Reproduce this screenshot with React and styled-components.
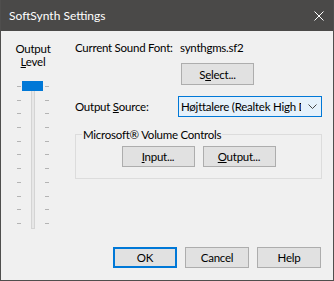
import React from 'react';
import styled, { createGlobalStyle } from 'styled-components';

const FONT = `Lato, "Noto Sans", "Liberation Sans", sans-serif`;

const Global = createGlobalStyle`
  html, body { margin: 0; padding: 0; background: #f0f0f0; }
  body { font-family: ${FONT}; font-size: 12px; }
`;

const Window = styled.div`
  box-sizing: border-box;
  width: 334px;
  height: 281px;
  display: flex;
  flex-direction: column;
  background: #f0f0f0;
  border: 1px solid #4f4e4d;
  border-top: none;
  font-family: ${FONT};
  font-size: 11.5px;
  letter-spacing: -0.25px;
  line-height: 13px;
  color: #000;
  overflow: hidden;
`;

const TitleBar = styled.div`
  box-sizing: border-box;
  height: 31px;
  margin: 0 -1px;
  padding: 0 10px 0 9px;
  background: #4a4948;
  color: #fff;
  display: flex;
  align-items: center;
  justify-content: space-between;
  font-size: 12px;
  letter-spacing: 0;
  flex: none;
`;

const Body = styled.div`
  display: flex;
  min-width: 0;
`;

const SliderColumn = styled.div`
  flex: none;
  width: 64px;
  padding-top: 11px;
  display: flex;
  flex-direction: column;
  align-items: center;
`;

const SliderLabel = styled.div`
  text-align: center;
  white-space: nowrap;
`;

const Slider = styled.div`
  position: relative;
  margin-top: 13px;
  width: 32px;
  height: 148px;
  display: grid;
  grid-template-columns: 4px 1fr 4px;
`;

const TickColumn = styled.div`
  display: flex;
  flex-direction: column;
  justify-content: space-between;
  padding: 5px 0;
`;

const Tick = styled.div`
  height: 1px;
  background: #b4b4b4;
`;

const Track = styled.div`
  box-sizing: border-box;
  justify-self: center;
  width: 4px;
  height: 100%;
  border: 1px solid #d4d4d4;
  background: #e7e7e7;
`;

const Thumb = styled.div`
  position: absolute;
  left: 5px;
  top: 0;
  width: 21px;
  height: 10px;
  background: #0078d7;
`;

const RightPanel = styled.div`
  flex: 1;
  min-width: 0;
  padding: 10px 11px 0 10px;
  display: flex;
  flex-direction: column;
`;

const Row = styled.div`
  display: flex;
  align-items: center;
  min-width: 0;
  margin-top: ${p => p.$mt || 0}px;
`;

const Label = styled.div`
  width: 103px;
  flex: none;
  white-space: nowrap;
`;

const Value = styled.div`
  padding-left: 2px;
  white-space: nowrap;
`;

const Button = styled.button`
  box-sizing: border-box;
  flex: none;
  width: ${p => p.$w || 64}px;
  height: ${p => p.$h || 21}px;
  margin-left: ${p => p.$ml || 0}px;
  padding: 0;
  background: #e1e1e1;
  border: ${p => (p.$default ? '2px solid #0078d7' : '1px solid #adadad')};
  font-family: ${FONT};
  font-size: 11.5px;
  letter-spacing: -0.25px;
  color: #000;
  line-height: 13px;
  white-space: nowrap;
`;

const Dropdown = styled.div`
  box-sizing: border-box;
  flex: 1;
  min-width: 0;
  height: 21px;
  display: flex;
  align-items: center;
  padding-left: 2px;
  border: 1px solid #0078d7;
  background: #e5f1fb;
`;

const DropText = styled.div`
  flex: 1;
  min-width: 0;
  overflow: hidden;
  white-space: nowrap;
  margin-right: 7px;
`;

const Chevron = styled.svg`
  flex: none;
  margin-right: 4px;
`;

const Group = styled.fieldset`
  margin: 11px 0 0;
  padding: 0 0 11px;
  border: 1px solid #dcdcdc;
  min-width: 0;
`;

const Legend = styled.legend`
  margin-left: 6px;
  padding: 0 1px;
  line-height: 13px;
  white-space: nowrap;
`;

const GroupButtons = styled.div`
  display: flex;
  justify-content: center;
  gap: 8px;
  margin-top: 5px;
`;

const Footer = styled.div`
  margin-top: auto;
  display: flex;
  justify-content: flex-end;
  gap: 8px;
  padding: 0 12px 12px 0;
`;

const Key = styled.u`
  text-underline-offset: 1px;
`;

export default function App() {
  return (
    <>
      <Global />
      <Window>
        <TitleBar>
          <span>SoftSynth Settings</span>
          <svg width="10" height="10" viewBox="0 0 10 10">
            <path d="M0.5 0.5 L9.5 9.5 M9.5 0.5 L0.5 9.5" stroke="#fff" strokeWidth="1" fill="none" />
          </svg>
        </TitleBar>
        <Body>
          <SliderColumn>
            <SliderLabel>
              Output<br />
              <Key>L</Key>evel
            </SliderLabel>
            <Slider>
              <TickColumn>
                {Array.from({ length: 11 }).map((_, i) => <Tick key={i} />)}
              </TickColumn>
              <Track />
              <TickColumn>
                {Array.from({ length: 11 }).map((_, i) => <Tick key={i} />)}
              </TickColumn>
              <Thumb />
            </Slider>
          </SliderColumn>
          <RightPanel>
            <Row>
              <Label>Current Sound Font:</Label>
              <Value>synthgms.sf2</Value>
            </Row>
            <Row $mt={9}>
              <Label />
              <Button $w={73} $h={22} $ml={3}>S<Key>e</Key>lect...</Button>
            </Row>
            <Row $mt={11}>
              <Label>Output <Key>S</Key>ource:</Label>
              <Dropdown>
                <DropText>Højttalere (Realtek High Definition Audio)</DropText>
                <Chevron width="9" height="5" viewBox="0 0 9 5">
                  <path d="M0.5 0.5 L4.5 4.5 L8.5 0.5" stroke="#444" strokeWidth="1" fill="none" />
                </Chevron>
              </Dropdown>
            </Row>
            <Group>
              <Legend>Microsoft® Volume Controls</Legend>
              <GroupButtons>
                <Button $w={73}><Key>I</Key>nput...</Button>
                <Button $w={73}><Key>O</Key>utput...</Button>
              </GroupButtons>
            </Group>
          </RightPanel>
        </Body>
        <Footer>
          <Button $default>OK</Button>
          <Button>Cancel</Button>
          <Button>Help</Button>
        </Footer>
      </Window>
    </>
  );
}
